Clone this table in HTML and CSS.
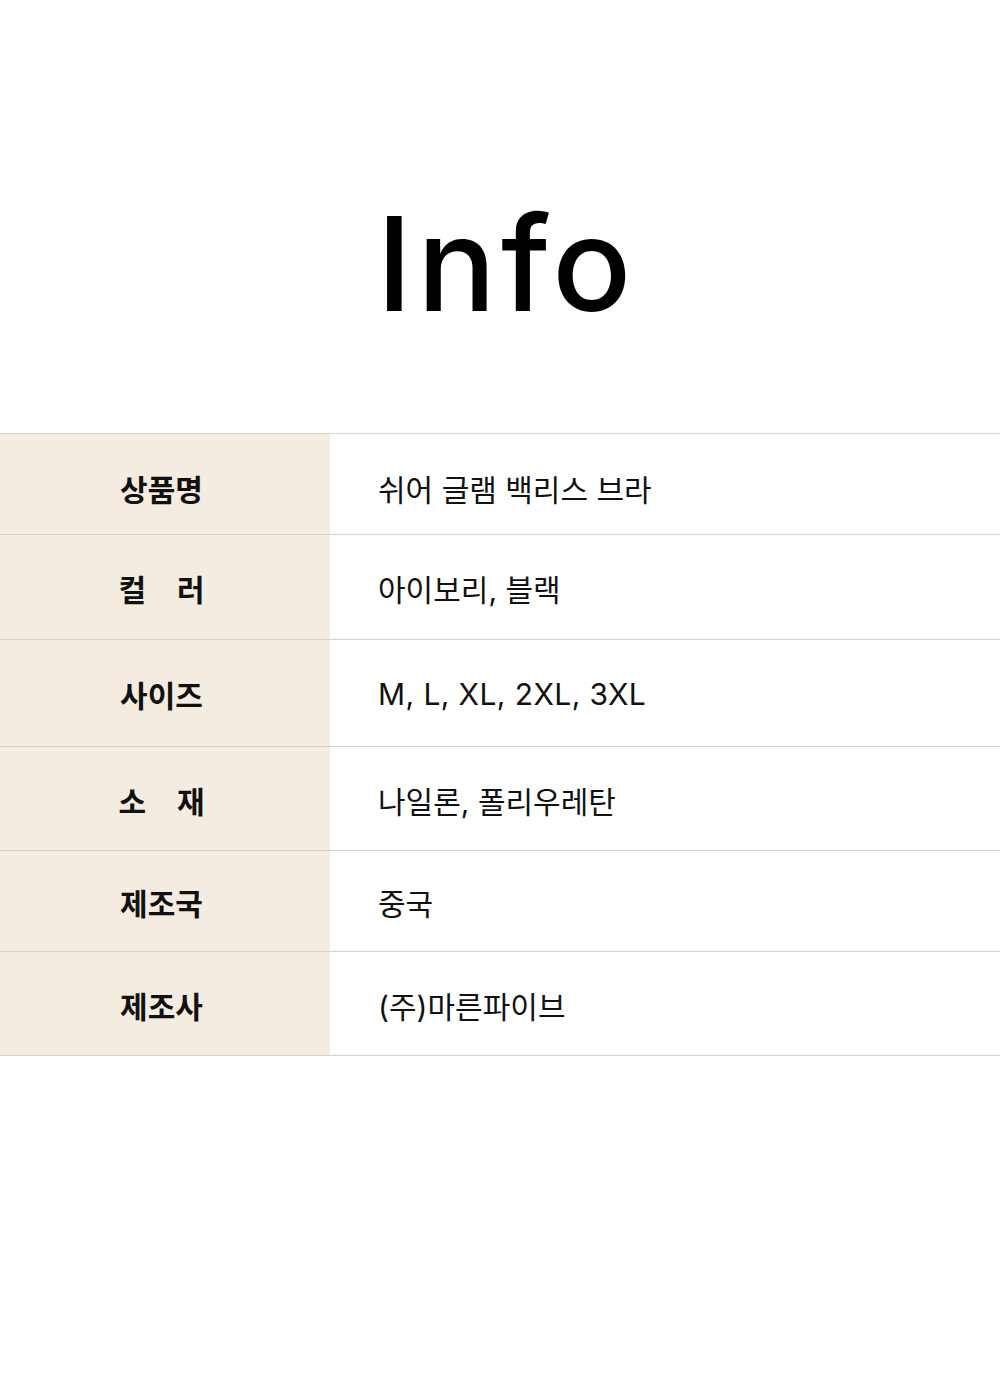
FILE: index.html
```html
<!DOCTYPE html>
<html lang="ko">
<head>
<meta charset="utf-8">
<link rel="stylesheet" href="styles.css">
</head>
<body>
<div class="page">
  <h1 class="title">Info</h1>
  <div class="table">
    <div class="row r1"><div class="label">상품명</div><div class="value">쉬어 글램 백리스 브라</div></div>
    <div class="row r2"><div class="label"><span class="spread"><span>컬</span><span>러</span></span></div><div class="value">아이보리, 블랙</div></div>
    <div class="row r3"><div class="label">사이즈</div><div class="value latin">M, L, XL, 2XL, 3XL</div></div>
    <div class="row r4"><div class="label"><span class="spread"><span>소</span><span>재</span></span></div><div class="value">나일론, 폴리우레탄</div></div>
    <div class="row r5"><div class="label">제조국</div><div class="value">중국</div></div>
    <div class="row r6"><div class="label">제조사</div><div class="value">(주)마른파이브</div></div>
  </div>
</div>
</body>
</html>
```

FILE: styles.css
```css
html, body {
  margin: 0;
  padding: 0;
  background: #ffffff;
}
.page {
  width: 1000px;
  height: 1400px;
  font-family: "Noto Sans CJK KR", "Noto Sans", sans-serif;
  color: #111;
}
.title {
  margin: 0;
  padding-top: 198px;
  padding-left: 13px;
  height: 433px;
  box-sizing: border-box;
  text-align: center;
  font-family: Inter, "Noto Sans", sans-serif;
  font-weight: 500;
  font-size: 131px;
  line-height: 131px;
  letter-spacing: 5px;
  color: #000;
}
.table {
  border-top: 1px solid #d2d2d2;
}
.row {
  display: flex;
  border-bottom: 1px solid #d2d2d2;
}
.r1 { height: 100px; }
.r2 { height: 104px; }
.r3 { height: 106px; }
.r4 { height: 103px; }
.r5 { height: 100px; }
.r6 { height: 103px; }
.label {
  width: 330px;
  flex: none;
  background: #f4ece0;
  display: flex;
  align-items: center;
  justify-content: center;
  font-size: 30px;
  font-weight: 700;
  padding-top: 2px;
  box-sizing: border-box;
  padding-right: 7px;
}
.r1 .label, .r1 .value { padding-top: 8px; }
.spread {
  display: inline-flex;
  justify-content: space-between;
  width: 86px;
}
.value {
  flex: 1;
  display: flex;
  align-items: center;
  padding-left: 48px;
  padding-top: 2px;
  font-family: Inter, "Noto Sans CJK KR", sans-serif;
  font-size: 30px;
  font-weight: 400;
  letter-spacing: 0;
}
.value.latin {
  letter-spacing: 0.4px;
}
```
